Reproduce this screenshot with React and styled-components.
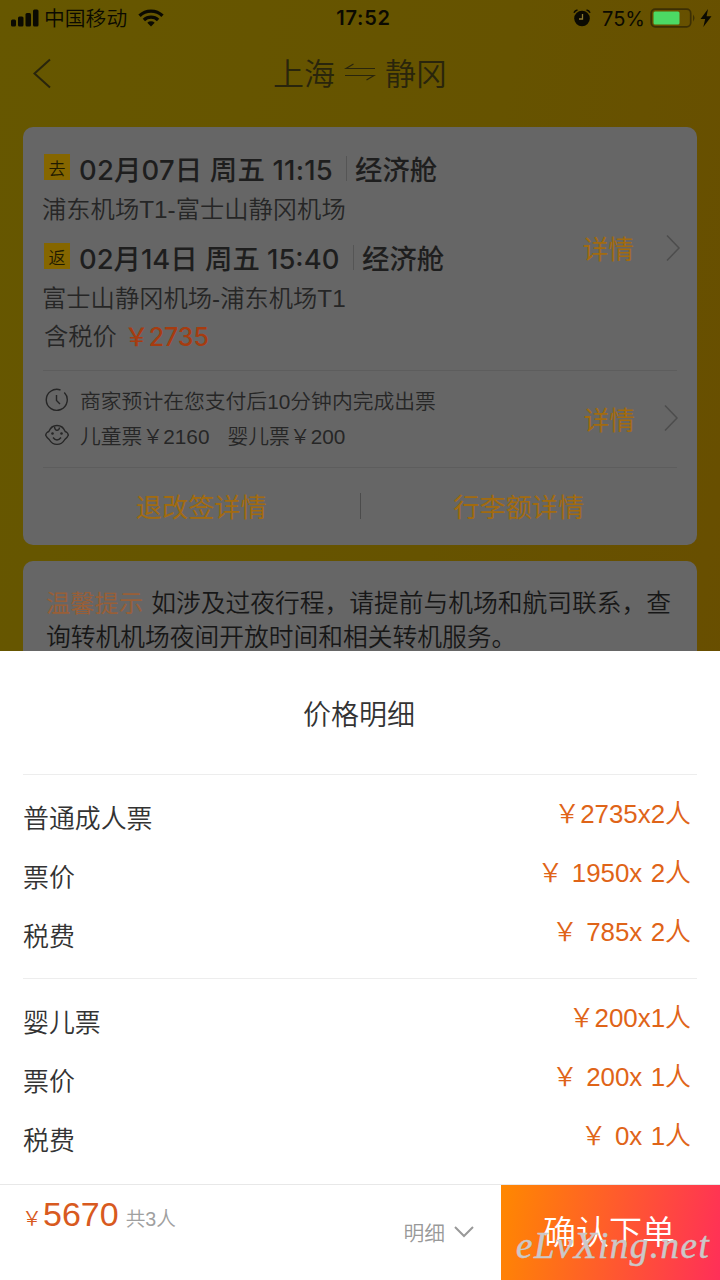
import styled, { createGlobalStyle } from 'styled-components';

const GlobalStyle = createGlobalStyle`
    * {
        box-sizing: border-box;
    }
    body {
        margin: 0;
        font-family: 'Liberation Sans', 'Noto Sans CJK SC', sans-serif;
        font-weight: 350;
        white-space: nowrap;
    }
    svg {
        display: block;
        flex: none;
    }
`

const Page = styled.div`
    position: relative;
    width: 720px;
    height: 1280px;
    overflow: hidden;
    background: linear-gradient(100deg, #665700, #665300 55%, #694d00);
`

const StatusBar = styled.div`
    display: grid;
    grid-template-columns: 1fr auto 1fr;
    align-items: center;
    height: 36px;
    padding: 0 8px 0 10px;
    color: #0b0a02;
    font-size: 20.8px;
`

const StatusSide = styled.div`
    display: flex;
    align-items: center;
    justify-content: ${({ $end }) => $end ? 'flex-end' : 'flex-start'};
`

const Carrier = styled.span`
    margin: -2px 11px 0 5px;
`

const Clock = styled.span`
    padding-left: 5px;
    font-family: Inter, sans-serif;
    font-size: 20px;
    font-weight: 600;
    letter-spacing: 0.8px;
`

const Percent = styled.span`
    margin: 1px 5px 0 11px;
    font-family: Inter, sans-serif;
    font-size: 20px;
    font-weight: 400;
`

const NavBar = styled.div`
    display: grid;
    grid-template-columns: 1fr auto 1fr;
    align-items: center;
    height: 91px;
    padding: 0 32px 16px;
    color: #29250c;
`

const Route = styled.div`
    display: flex;
    align-items: center;
    gap: 9px;
    margin-top: -4px;
    font-size: 31px;
`

const Card = styled.div`
    width: 674px;
    height: ${({ $height }) => $height}px;
    margin: 0 auto 16px;
    padding: 0 20px;
    border-radius: 10px;
    background: #666;
    color: #262626;
`

const CardSection = styled.div`
    display: flex;
    align-items: center;
    justify-content: space-between;
    height: ${({ $height }) => $height}px;
    border-bottom: 1px solid #5d5d5d;
`

const Flights = styled.div`
    padding-top: 18px;
    height: 100%;
`

const FlightTime = styled.div`
    display: flex;
    align-items: center;
    height: 46px;
    font-family: Inter, 'Noto Sans CJK SC', sans-serif;
    font-size: 27.4px;
    font-weight: 500;
    color: #1e1e1e;
`

const Badge = styled.span`
    display: flex;
    align-items: center;
    justify-content: center;
    width: 26px;
    height: 26px;
    margin: -2px 9px 0 1px;
    background: #856600;
    color: #1f1a00;
    font-size: 17px;
    font-weight: 350;
`

const When = styled.span`
    width: ${({ $width }) => $width}px;
    letter-spacing: ${({ $spacing }) => $spacing}px;
`

const Bar = styled.span`
    width: 1px;
    height: 25px;
    margin: 0 8px 0 14px;
    background: #555;
`

const Airports = styled.div`
    height: 43px;
    margin-left: -1px;
    line-height: 37px;
    font-size: 24.3px;
`

const TaxPrice = styled.div`
    display: flex;
    align-items: center;
    height: 35px;
    margin-top: -6px;
    padding-left: 1px;
    font-size: 24.3px;
`

const Amount = styled.span`
    margin-left: 7px;
    font-family: Inter, 'Noto Sans CJK SC', sans-serif;
    font-size: 25px;
    font-weight: 500;
    letter-spacing: -0.1px;
    color: #a63c10;
`

const Detail = styled.div`
    display: flex;
    align-items: center;
    gap: ${({ $gap }) => $gap}px;
    margin: -2px ${({ $shift }) => -$shift}px 0 0;
    font-size: 25.7px;
    font-weight: 400;
    color: #a26b0f;
`

const Notes = styled.div`
    display: flex;
    flex-direction: column;
    padding-left: 2px;
    margin-top: -3px;
`

const Note = styled.div`
    display: flex;
    align-items: center;
    gap: 11px;
    height: 35px;
    font-size: 20.8px;
`

const ChildFares = styled.span`
    display: flex;
    gap: 18px;
`

const Links = styled.div`
    display: grid;
    grid-template-columns: 1fr 1px 1fr;
    align-items: center;
    justify-items: center;
    height: 76px;
    font-size: 26.2px;
    font-weight: 400;
    color: #a26b0f;
`

const LinkBar = styled.span`
    width: 1px;
    height: 26px;
    background: #4b4b4b;
`

const Tip = styled.p`
    margin: 0;
    padding: 26px 0 0 3px;
    font-size: 24.75px;
    line-height: 34px;
    color: #171717;
`

const TipLabel = styled.span`
    margin-right: 8px;
    font-size: 24.3px;
    font-weight: 400;
    color: #985f38;
`

const Sheet = styled.div`
    position: absolute;
    left: 0;
    right: 0;
    bottom: 0;
    height: 629px;
    display: flex;
    flex-direction: column;
    background: #fff;
    color: #333;
`

const SheetTitle = styled.div`
    display: flex;
    align-items: center;
    justify-content: center;
    height: 123px;
    padding-right: 2px;
    font-size: 28px;
`

const PriceGroup = styled.div`
    height: ${({ $height }) => $height}px;
    margin: 0 23px;
    padding: 15px 6px 0 0;
    border-top: 1px solid #ededed;
`

const PriceRow = styled.div`
    display: flex;
    justify-content: space-between;
    height: 59px;
    line-height: 59px;
    font-size: 25.9px;
`

const PriceValue = styled.span`
    margin-top: -5px;
    white-space: pre;
    word-spacing: 1.2px;
    color: #df6418;
`

const Footer = styled.div`
    display: flex;
    height: 96px;
    border-top: 1px solid #e8e8e8;
`

const Total = styled.div`
    display: flex;
    flex: 1;
    align-items: baseline;
    height: 60px;
    padding-left: 22px;
    line-height: 58px;
    color: #d85a20;
    font-size: 20px;
`

const TotalNumber = styled.span`
    margin: 0 7px 0 1px;
    font-size: 34px;
`

const People = styled.span`
    font-size: 19.7px;
    color: #a0a0a0;
`

const Toggle = styled.div`
    display: flex;
    align-items: center;
    gap: 9px;
    padding: 0 27px 2px 0;
    font-size: 20.8px;
    color: #999;
`

const Confirm = styled.button`
    position: relative;
    width: 219px;
    padding: 0 3px 5px 0;
    border: 0;
    background: linear-gradient(100deg, #ff8800, #ff2f58);
    color: #fff;
    font: 350 33px 'Noto Sans CJK SC', sans-serif;
`

const Watermark = styled.span`
    position: absolute;
    left: 15px;
    bottom: 14px;
    font: italic 400 37px/40px 'Liberation Serif', serif;
    letter-spacing: 1.5px;
    color: #cbc8c8;
    -webkit-text-stroke: 0.5px #cbc8c8;
`

const groups = [
    {
        height: 204,
        rows: [
            ['普通成人票', '￥2735x2人'],
            ['票价', '￥ 1950x 2人'],
            ['税费', '￥ 785x 2人'],
        ],
    },
    {
        height: 206,
        rows: [
            ['婴儿票', '￥200x1人'],
            ['票价', '￥ 200x 1人'],
            ['税费', '￥ 0x 1人'],
        ],
    },
]

const SignalIcon = () => (
    <svg width="29" height="18" viewBox="0 0 29 18" fill="currentColor">
        <rect x="1" y="10.5" width="5" height="7" rx="1.5" />
        <rect x="8" y="7.5" width="5.5" height="10" rx="1.5" />
        <rect x="15.5" y="4" width="5.5" height="13.5" rx="1.5" />
        <rect x="23" y="0.5" width="5.5" height="17" rx="1.5" />
    </svg>
)

const WifiIcon = () => (
    <svg width="26" height="18" viewBox="0 0 26 18" fill="none" stroke="currentColor" strokeWidth="3.3">
        <path d="M1.5 6.7a16.5 16.5 0 0 1 23 0" />
        <path d="M5.9 11a10.3 10.3 0 0 1 14.2 0" />
        <path d="M13 17.6l-3.7-3.8a5.5 5.5 0 0 1 7.4 0z" fill="currentColor" stroke="none" />
    </svg>
)

const AlarmIcon = () => (
    <svg width="18" height="18" viewBox="0 0 18 18" fill="none">
        <circle cx="9" cy="9.5" r="7.8" fill="currentColor" />
        <path d="M1 3.8Q2 1.5 4.5 1M17 3.8Q16 1.5 13.5 1" stroke="currentColor" strokeWidth="1.6" />
        <path d="M9.5 5v5H6" stroke="#8d7a30" strokeWidth="1.3" />
    </svg>
)

const BatteryIcon = () => (
    <svg width="50" height="20" viewBox="0 0 50 20" fill="none">
        <rect x="1.2" y="1.2" width="39.5" height="17.6" rx="4" stroke="#3c2f04" strokeWidth="1.7" />
        <rect x="3.5" y="3.5" width="26" height="13" rx="1.5" fill="#4cd964" />
        <path d="M43 6.5q3 3.5 0 7z" fill="#3c2f04" />
    </svg>
)

const BoltIcon = () => (
    <svg width="12" height="18" viewBox="0 0 12 18" fill="currentColor">
        <path d="M8 0L0.5 10h4.7L3.3 18 11.5 7.3H6.6z" />
    </svg>
)

const BackIcon = () => (
    <svg width="20" height="32" viewBox="0 0 20 32" fill="none" stroke="currentColor" strokeWidth="2">
        <path d="M18 1.5L2.5 15.5 18 29.5" />
    </svg>
)

const SwapIcon = () => (
    <svg width="32" height="20" viewBox="0 0 32 20" fill="none" stroke="currentColor" strokeWidth="1.2">
        <path d="M31 6.5H2L9.5 2M1 13.5h29L22.5 18" />
    </svg>
)

const ChevronRight = () => (
    <svg width="15" height="28" viewBox="0 0 15 28" fill="none" stroke="#4d4d4d" strokeWidth="1.5">
        <path d="M1 1.5L13 14 1 26.5" />
    </svg>
)

const ChevronDown = () => (
    <svg width="20" height="12" viewBox="0 0 20 12" fill="none" stroke="currentColor" strokeWidth="2">
        <path d="M1 1l9 9 9-9" />
    </svg>
)

const TimerIcon = () => (
    <svg width="24" height="24" viewBox="0 0 24 24" fill="none" stroke="currentColor" strokeWidth="1.4">
        <path d="M19.3 4.5A10.5 10.5 0 1 1 15.5 2" />
        <path d="M11.5 7v5.5l3.5 3.5" />
    </svg>
)

const BabyIcon = () => (
    <svg width="24" height="24" viewBox="0 0 24 24" fill="none" stroke="currentColor" strokeWidth="1.4">
        <path d="M3.8 8.5C7 0.5 17 0.5 20.2 8.5C22 9 23.3 11 23.3 12.2C22.5 14 21 15.5 19.8 16.5C16 23 8 23 4.2 16.5C3 15.5 1.5 14 0.7 12.2C0.7 11 2 9 3.8 8.5z" />
        <path d="M9.5 3.5Q9.8 7.3 12 7.3T14.5 4.5M8 14.5Q12 19.5 16 14.5" />
        <circle cx="7.5" cy="10.5" r="1.3" fill="currentColor" stroke="none" />
        <circle cx="16.5" cy="10.5" r="1.3" fill="currentColor" stroke="none" />
    </svg>
)

const App = () => {
    return (
        <Page>
            <GlobalStyle />
            <StatusBar>
                <StatusSide>
                    <SignalIcon />
                    <Carrier>中国移动</Carrier>
                    <WifiIcon />
                </StatusSide>
                <Clock>17:52</Clock>
                <StatusSide $end>
                    <AlarmIcon />
                    <Percent>75%</Percent>
                    <BatteryIcon />
                    <BoltIcon />
                </StatusSide>
            </StatusBar>
            <NavBar>
                <BackIcon />
                <Route>
                    上海
                    <SwapIcon />
                    静冈
                </Route>
            </NavBar>

            <Card $height={418}>
                <CardSection $height={244}>
                    <Flights>
                        <FlightTime>
                            <Badge>去</Badge>
                            <When $width={253} $spacing={0.2}>02月07日 周五 11:15</When>
                            <Bar />
                            经济舱
                        </FlightTime>
                        <Airports>浦东机场T1-富士山静冈机场</Airports>
                        <FlightTime>
                            <Badge>返</Badge>
                            <When $width={260} $spacing={0}>02月14日 周五 15:40</When>
                            <Bar />
                            经济舱
                        </FlightTime>
                        <Airports>富士山静冈机场-浦东机场T1</Airports>
                        <TaxPrice>
                            含税价
                            <Amount>￥2735</Amount>
                        </TaxPrice>
                    </Flights>
                    <Detail $gap={32} $shift={4}>
                        详情
                        <ChevronRight />
                    </Detail>
                </CardSection>
                <CardSection $height={97}>
                    <Notes>
                        <Note>
                            <TimerIcon />
                            商家预计在您支付后10分钟内完成出票
                        </Note>
                        <Note>
                            <BabyIcon />
                            <ChildFares>
                                <span>儿童票￥2160</span>
                                <span>婴儿票￥200</span>
                            </ChildFares>
                        </Note>
                    </Notes>
                    <Detail $gap={29} $shift={2}>
                        详情
                        <ChevronRight />
                    </Detail>
                </CardSection>
                <Links>
                    <span>退改签详情</span>
                    <LinkBar />
                    <span>行李额详情</span>
                </Links>
            </Card>

            <Card $height={140}>
                <Tip>
                    <TipLabel>温馨提示</TipLabel>
                    如涉及过夜行程，请提前与机场和航司联系，查
                    <br />
                    询转机机场夜间开放时间和相关转机服务。
                </Tip>
            </Card>

            <Sheet>
                <SheetTitle>价格明细</SheetTitle>
                {groups.map((group, i) => (
                    <PriceGroup key={i} $height={group.height}>
                        {group.rows.map(([label, value]) => (
                            <PriceRow key={label}>
                                <span>{label}</span>
                                <PriceValue>{value}</PriceValue>
                            </PriceRow>
                        ))}
                    </PriceGroup>
                ))}
                <Footer>
                    <Total>
                        ￥
                        <TotalNumber>5670</TotalNumber>
                        <People>共3人</People>
                    </Total>
                    <Toggle>
                        明细
                        <ChevronDown />
                    </Toggle>
                    <Confirm>
                        确认下单
                        <Watermark>eLvXing.net</Watermark>
                    </Confirm>
                </Footer>
            </Sheet>
        </Page>
    );
}

export default App;
